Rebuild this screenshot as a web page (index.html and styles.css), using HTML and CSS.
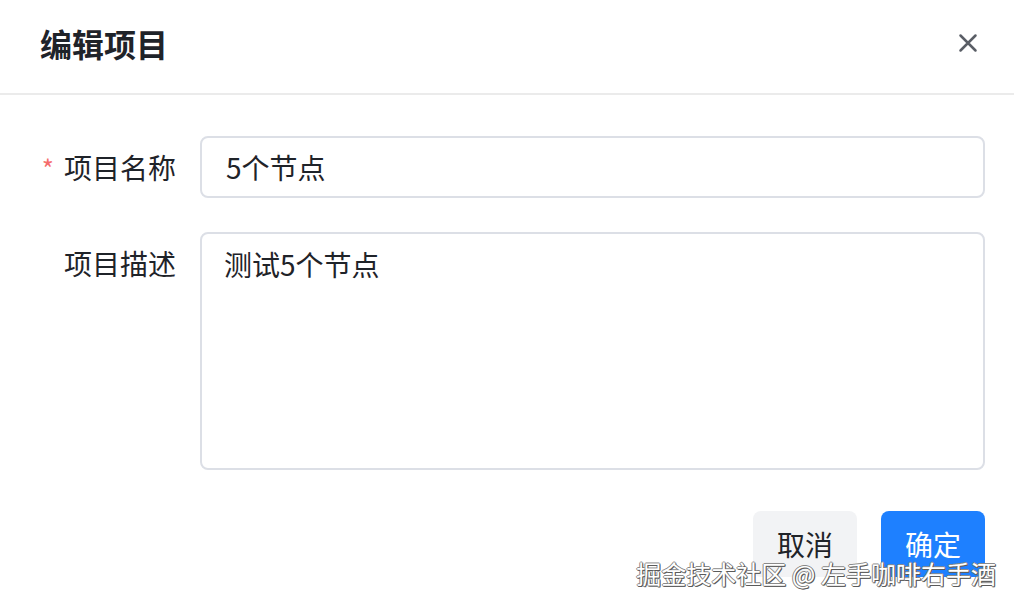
FILE: index.html
```html
<!doctype html>
<html lang="zh-CN">
<head>
    <meta charset="UTF-8">
    <meta name="viewport" content="width=device-width, initial-scale=1.0">
    <title>编辑项目</title>
    <link rel="stylesheet" href="styles.css">
</head>
<body>
<div class="dialog">
    <div class="dialog-header">
        <h2>编辑项目</h2>
        <button class="close" type="button" aria-label="关闭">
            <svg width="20" height="20" viewBox="0 0 20 20">
                <path d="M2.5 2.5 L17.5 17.5 M17.5 2.5 L2.5 17.5" stroke="#5a5e66" stroke-width="2.5" stroke-linecap="round" fill="none"/>
            </svg>
        </button>
    </div>
    <form class="dialog-body">
        <div class="form-item">
            <label class="form-label"><span class="required">*</span>项目名称</label>
            <input class="form-input" type="text" value="5个节点">
        </div>
        <div class="form-item">
            <label class="form-label">项目描述</label>
            <textarea class="form-textarea">测试5个节点</textarea>
        </div>
        <div class="dialog-footer">
            <button type="button" class="btn btn-cancel">取消</button>
            <button type="submit" class="btn btn-primary">确定</button>
        </div>
    </form>
</div>
<div class="watermark">掘金技术社区 @ 左手咖啡右手酒</div>
</body>
</html>
```

FILE: styles.css
```css
body {
    font-family: "Noto Sans CJK SC", "Noto Sans", sans-serif;
    margin: 0;
    padding: 0;
    background: #ffffff;
    color: #1f2329;
    height: 606px;
    overflow: hidden;
    position: relative;
}
.dialog-header {
    display: flex;
    align-items: center;
    justify-content: space-between;
    height: 95px;
    padding: 0 36px 8px 40px;
    box-sizing: border-box;
    border-bottom: 2px solid #ebebeb;
}
.dialog-header h2 {
    margin: 0;
    font-size: 32px;
    font-weight: 700;
    color: #1f2329;
    line-height: 1;
}
.close {
    background: none;
    border: none;
    padding: 0;
    width: 20px;
    height: 20px;
    display: flex;
    cursor: pointer;
}
.dialog-body {
    padding: 41px 29px 0 40px;
}
.form-item {
    display: flex;
    align-items: flex-start;
    margin-bottom: 34px;
}
.form-label {
    width: 160px;
    height: 62px;
    padding-right: 24px;
    box-sizing: border-box;
    text-align: right;
    font-size: 28px;
    line-height: 62px;
    color: #1f2329;
    flex-shrink: 0;
}
.required {
    color: #f56c6c;
    margin-right: 10px;
    font-size: 26px;
}
.form-input,
.form-textarea {
    flex: 1;
    font-family: inherit;
    font-size: 28px;
    color: #1f2329;
    border: 2px solid #dcdfe6;
    border-radius: 8px;
    box-sizing: border-box;
    outline: none;
    background: #ffffff;
}
.form-input {
    height: 62px;
    padding: 0 24px;
}
.form-textarea {
    height: 238px;
    padding: 9px 22px;
    line-height: 1.5;
    resize: none;
}
.dialog-footer {
    display: flex;
    justify-content: flex-end;
    gap: 24px;
    margin-top: 41px;
}
.btn {
    width: 104px;
    height: 66px;
    border: none;
    border-radius: 8px;
    font-family: inherit;
    font-size: 28px;
    cursor: pointer;
}
.btn-cancel {
    background: #f2f3f5;
    color: #1f2329;
}
.btn-primary {
    background: #1e80ff;
    color: #ffffff;
}
.watermark {
    position: absolute;
    right: 18px;
    top: 555px;
    font-size: 25px;
    color: #ffffff;
    white-space: nowrap;
    text-shadow: 1px 1px 0 #5a5a5a, -1px 0 0 #8a8a8a, 0 -1px 0 #8a8a8a, 1px 0 0 #6a6a6a, 0 1px 0 #6a6a6a;
}
```
